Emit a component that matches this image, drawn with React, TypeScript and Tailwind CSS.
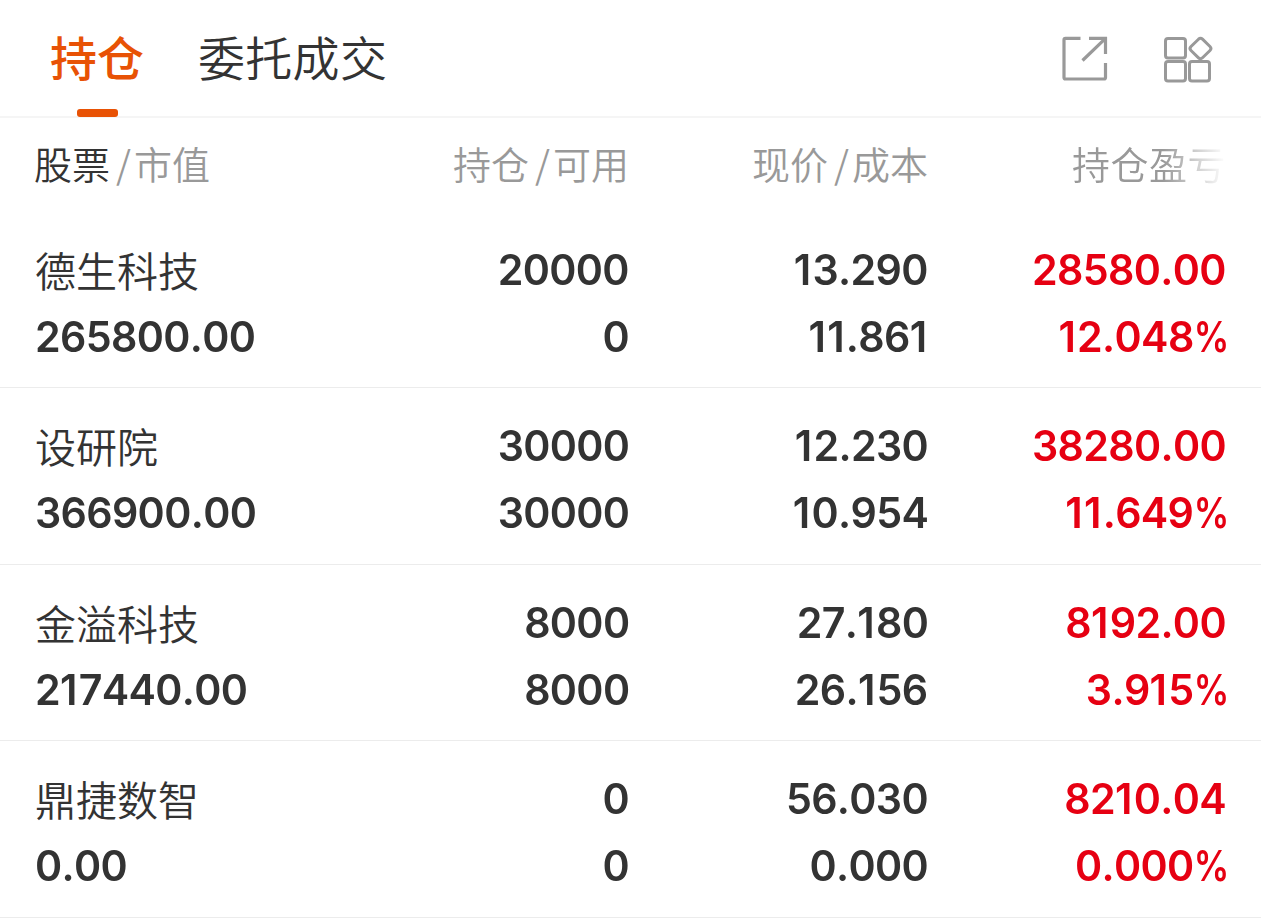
import React from "react";

type Row = { name: string; value: string; held: string; free: string; price: string; cost: string; profit: string; rate: string };

const rows: Row[] = [
  { name: "德生科技", value: "265800.00", held: "20000", free: "0", price: "13.290", cost: "11.861", profit: "28580.00", rate: "12.048%" },
  { name: "设研院", value: "366900.00", held: "30000", free: "30000", price: "12.230", cost: "10.954", profit: "38280.00", rate: "11.649%" },
  { name: "金溢科技", value: "217440.00", held: "8000", free: "8000", price: "27.180", cost: "26.156", profit: "8192.00", rate: "3.915%" },
  { name: "鼎捷数智", value: "0.00", held: "0", free: "0", price: "56.030", cost: "0.000", profit: "8210.04", rate: "0.000%" },
];

function Num({ text, left = false }: { text: string; left?: boolean }) {
  return (
    <span
      className={`block h-[67px] scale-x-[0.98] whitespace-nowrap text-[42px] leading-[67px] font-semibold tracking-[-0.65px] [font-kerning:none] ${left ? "origin-left" : "origin-right"}`}
    >
      {text.split(/([1%])/).map((part, i) => {
        if (part === "1") return <span key={i} className="tracking-[1.3px]">1</span>;
        if (part === "%") return <span key={i} className="inline-block w-[33.5px] origin-left scale-x-[0.86]">%</span>;
        return part;
      })}
    </span>
  );
}

function Pair({ a, b }: { a: string; b: string }) {
  return (
    <div className="flex flex-col items-end">
      <Num text={a} />
      <Num text={b} />
    </div>
  );
}

function Slash() {
  return <span className="pr-[3px] pl-[6px]">/</span>;
}

export default function App() {
  return (
    <main className="flex h-[919px] w-[1261px] flex-col overflow-hidden bg-white font-['Inter','Noto_Sans_CJK_SC',sans-serif] text-[#333333]">
      <header className="flex h-[118px] shrink-0 items-start justify-between border-b-2 border-[#f5f5f5] pl-[50px] pr-[49px]">
        <nav className="flex gap-[54px] text-[47px] leading-[118px]">
          <div className="flex h-[117px] w-[94px] flex-col items-center justify-between font-medium text-[#e85205]">
            <span className="h-[108px] leading-[118px]">持仓</span>
            <i className="h-[8px] w-[41px] rounded-[3px] bg-[#e85205]" />
          </div>
          <span className="font-[350] tracking-[0.3px]">委托成交</span>
        </nav>
        <div className="flex gap-[54px] pt-[35px]">
          <svg width="48" height="48" viewBox="0 0 48 48" fill="none" stroke="#999999" strokeWidth="3.200">
            <path d="M20.500 3.300H5.500Q4 3.300 4 4.800V42.500Q4 44 5.500 44H44Q45.500 44 45.500 42.500V28M29 3.300H45.500V19M45.500 3.300L22.500 25.500" />
          </svg>
          <svg width="50" height="48" viewBox="0 0 50 48" className="overflow-visible" fill="none" stroke="#999999" strokeWidth="3">
            <rect x="3.500" y="3.500" width="20" height="19.500" rx="2.500" />
            <rect x="3.500" y="26.500" width="20" height="19.500" rx="2.500" />
            <rect x="27.500" y="26.500" width="20" height="19.500" rx="2.500" />
            <path d="M36.500 4.200Q38.500 2.300 40.500 4.200L48 11.500Q50 13.500 48 15.500L40.500 22.800Q38.500 24.700 36.500 22.800L29 15.500Q27 13.500 29 11.500Z" />
          </svg>
        </div>
      </header>
      <div className="grid h-[93.5px] shrink-0 grid-cols-[300px_294px_299px_298px] pl-[35px] font-['Noto_Sans_CJK_SC',sans-serif] text-[38px] leading-[89px] font-[350] text-[#999999]">
        <div className="-ml-px"><span className="text-[#333333]">股票</span><Slash />市值</div>
        <div className="text-right">持仓<Slash />可用</div>
        <div className="text-right">现价<Slash />成本</div>
        <div className="overflow-hidden whitespace-nowrap pl-[144px] tracking-[0.5px] [mask-image:linear-gradient(to_right,black_235px,transparent_298px)]">持仓盈亏</div>
      </div>
      {rows.map((r) => (
        <section key={r.name} className="grid h-[176.6px] shrink-0 grid-cols-[300px_294px_299px_298px] border-b border-[#ececec] pl-[35px] pt-[24px]">
          <div className="flex flex-col">
            <span className="h-[67px] text-[41px] leading-[73px] font-[350]">{r.name}</span>
            <Num text={r.value} left />
          </div>
          <Pair a={r.held} b={r.free} />
          <Pair a={r.price} b={r.cost} />
          <div className="text-[#e60012]"><Pair a={r.profit} b={r.rate} /></div>
        </section>
      ))}
    </main>
  );
}
